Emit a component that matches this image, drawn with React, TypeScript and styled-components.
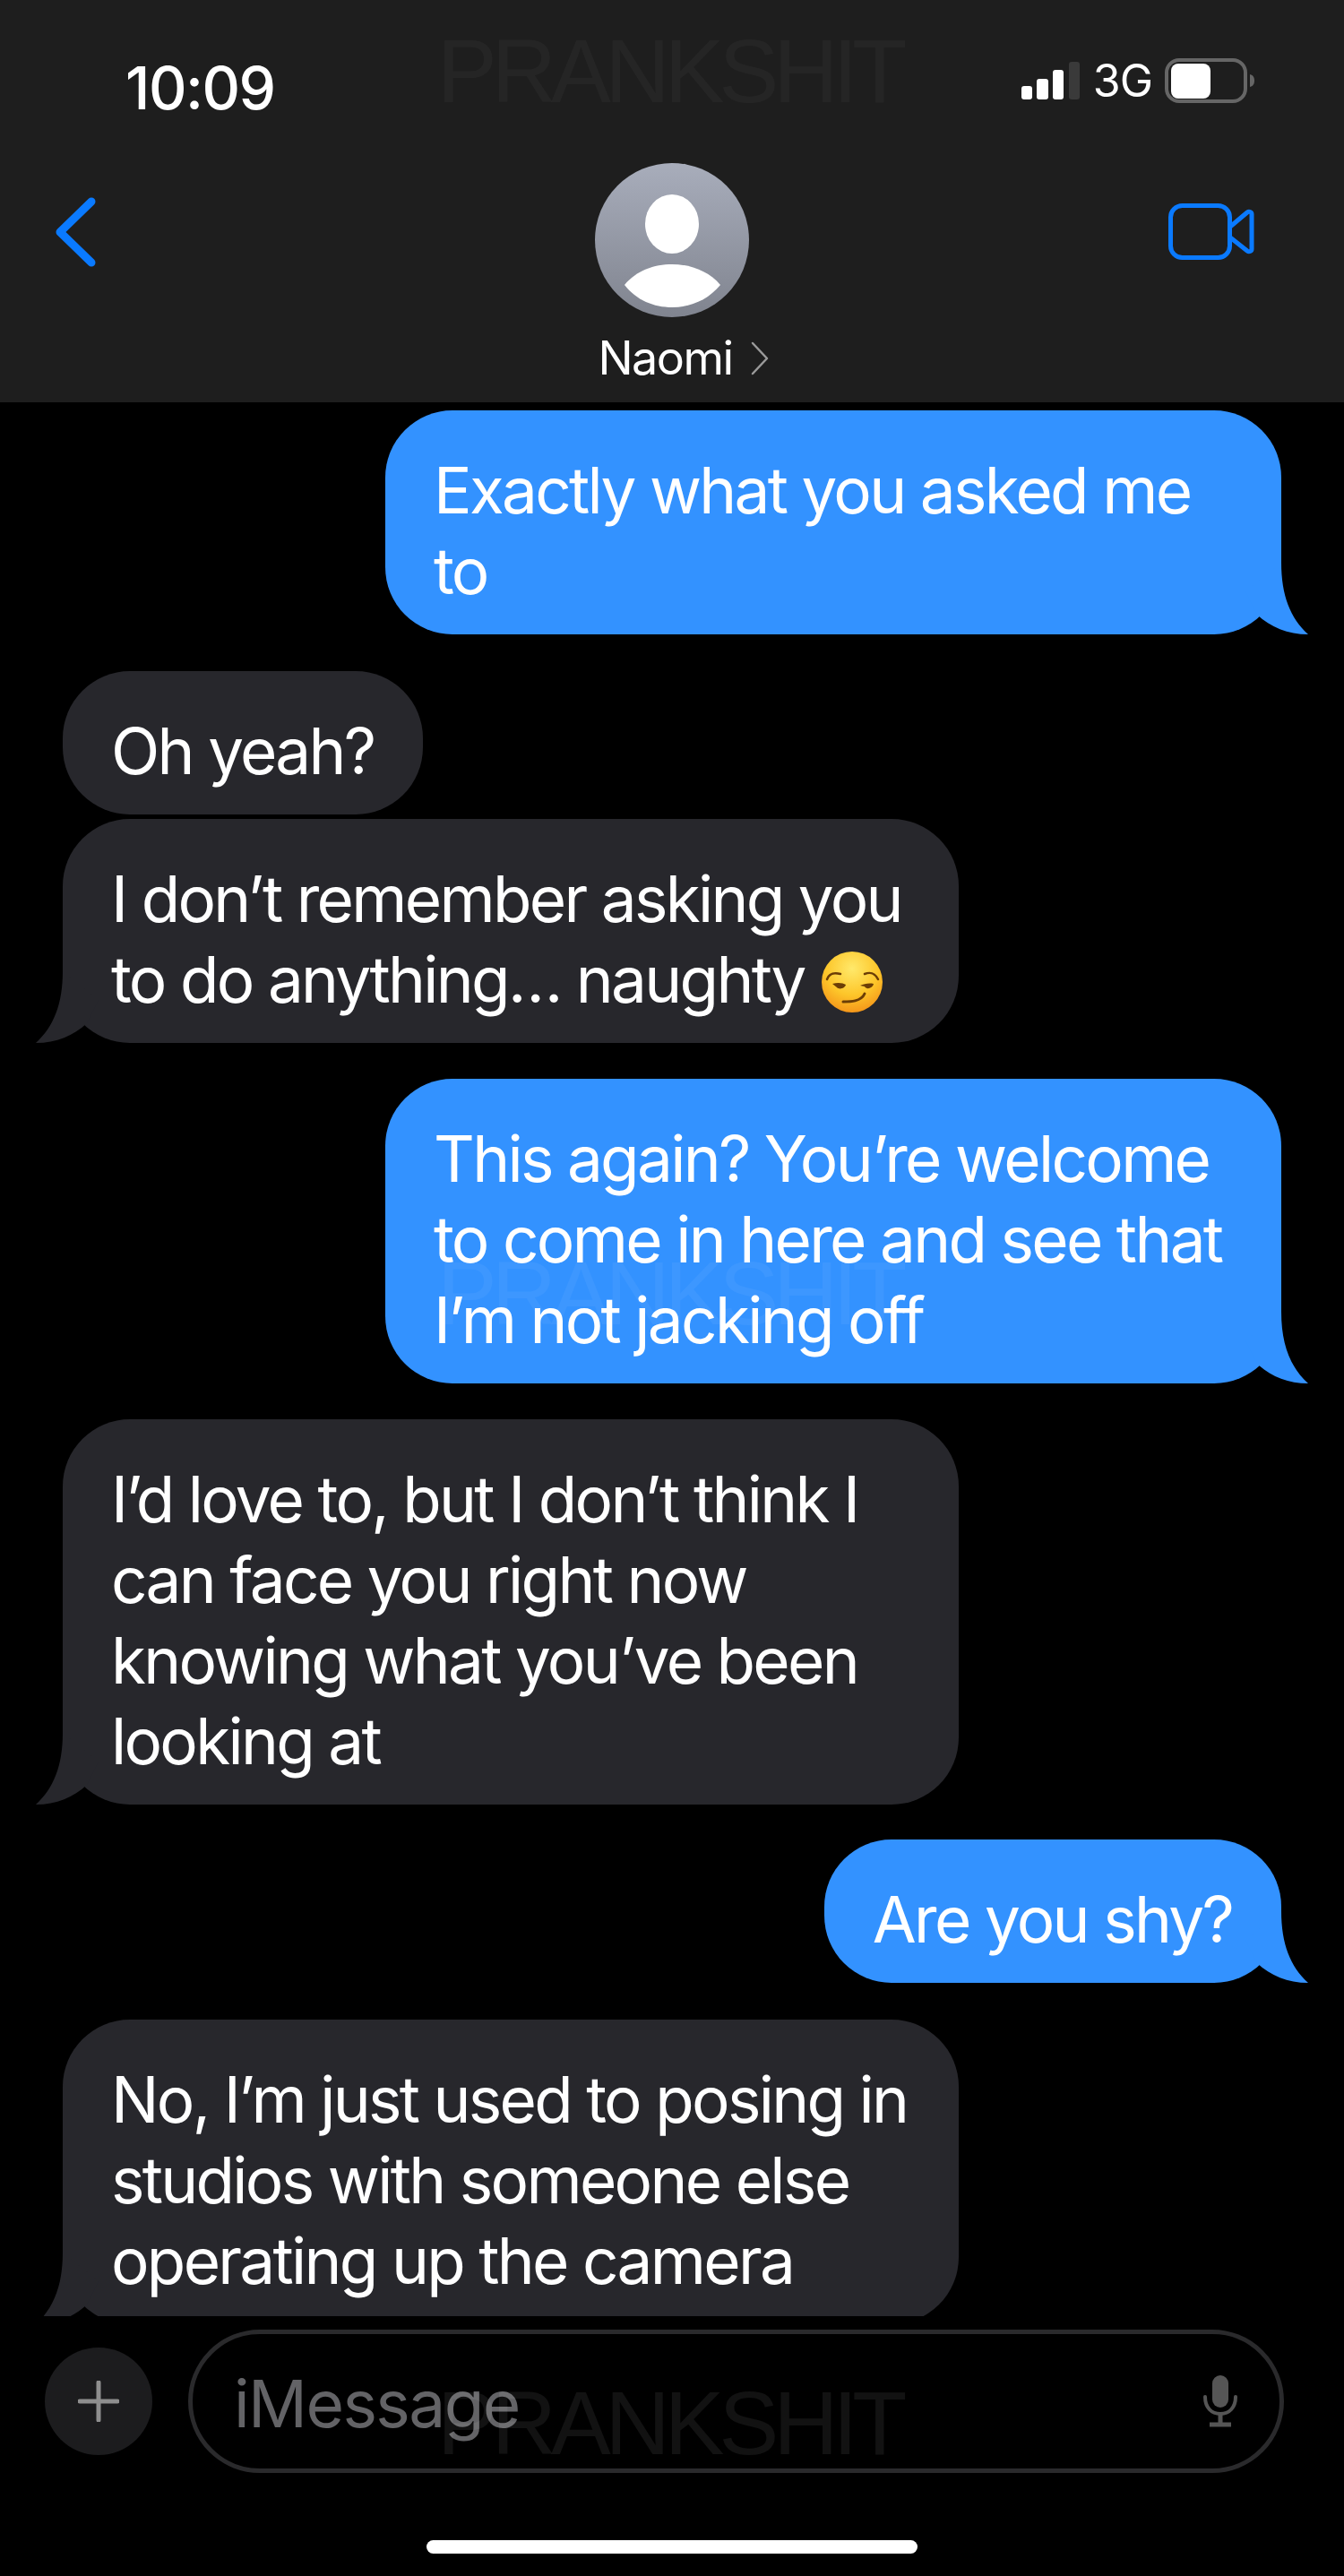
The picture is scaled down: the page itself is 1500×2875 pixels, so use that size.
import styled, { createGlobalStyle } from 'styled-components';

const GlobalStyle = createGlobalStyle`
  html, body {
    margin: 0;
    padding: 0;
    background: #000;
  }
  body {
    font-family: Inter, "Liberation Sans", sans-serif;
    color: #fff;
  }
`;

const Screen = styled.div`
  position: relative;
  width: 1500px;
  height: 2875px;
  display: flex;
  flex-direction: column;
  overflow: hidden;
  background: #000;
`;

const Watermark = styled.div<{ $top: number; $alpha: number }>`
  position: absolute;
  top: ${p => p.$top}px;
  left: 488px;
  font-family: "Liberation Sans", sans-serif;
  font-size: 100px;
  line-height: 72px;
  letter-spacing: -6px;
  white-space: nowrap;
  color: rgba(255, 255, 255, ${p => p.$alpha});
  pointer-events: none;
`;

const Header = styled.header`
  height: 449px;
  flex: none;
  background: #1e1e1e;
`;

const StatusBar = styled.div`
  height: 182px;
  padding: 64px 100px 0 140px;
  box-sizing: border-box;
  display: flex;
  justify-content: space-between;
  align-items: flex-start;
`;

const Clock = styled.span`
  font-size: 66px;
  line-height: 68px;
  font-weight: 500;
  letter-spacing: -1.5px;
`;

const StatusIcons = styled.div`
  display: flex;
  align-items: center;
  gap: 14px;
  margin-top: 1px;
`;

const Network = styled.span`
  font-size: 50px;
  line-height: 50px;
  letter-spacing: -1px;
`;

const Nav = styled.nav`
  display: grid;
  grid-template-columns: 1fr auto 1fr;
  padding: 0 100px;
`;

const Contact = styled.div`
  display: flex;
  flex-direction: column;
  align-items: center;
`;

const ContactName = styled.div`
  display: flex;
  align-items: center;
  gap: 20px;
  margin-top: 16px;
  padding-left: 25px;
  font-size: 52px;
  line-height: 60px;
  letter-spacing: -1.5px;
`;

const BackIcon = styled.svg`
  margin: 36px 0 0 -40px;
`;

const VideoIcon = styled.svg`
  margin-top: 45px;
  justify-self: end;
`;

const Messages = styled.main`
  height: 2136px;
  flex: none;
  padding: 9px 70px 0;
  box-sizing: border-box;
  display: flex;
  flex-direction: column;
  overflow: hidden;
`;

const Bubble = styled.div<{ $sent?: boolean; $gap: number }>`
  position: relative;
  flex: none;
  width: fit-content;
  max-width: 1000px;
  box-sizing: border-box;
  margin-top: ${p => p.$gap}px;
  padding: 44px 55px 26px 54px;
  align-self: ${p => (p.$sent ? 'flex-end' : 'flex-start')};
  border-radius: 75px;
  background: ${p => (p.$sent ? '#3392ff' : '#27272c')};
  font-size: 71px;
  line-height: 90px;
  letter-spacing: -2.7px;
  &:first-child {
    margin-top: 0;
  }
`;

const BubbleText = styled.div`
  position: relative;
`;

const Tail = styled.svg<{ $sent?: boolean }>`
  position: absolute;
  bottom: 0;
  ${p => (p.$sent ? 'right: -30px;' : 'left: -30px; transform: scaleX(-1);')}
`;

const Emoji = styled.svg`
  display: inline-block;
  vertical-align: -11px;
  margin-left: 2px;
`;

const Composer = styled.footer`
  margin-top: 15px;
  padding: 0 67px 0 50px;
  display: flex;
  align-items: center;
  gap: 40px;
`;

const PlusButton = styled.div`
  width: 120px;
  height: 120px;
  flex: none;
  border-radius: 50%;
  background: #1c1c1e;
  display: flex;
  align-items: center;
  justify-content: center;
`;

const Input = styled.div`
  flex: 1;
  height: 160px;
  box-sizing: border-box;
  padding: 0 46px 0 46px;
  border: 5px solid #2a2a2c;
  border-radius: 80px;
  display: flex;
  align-items: center;
  justify-content: space-between;
`;

const Placeholder = styled.span`
  padding-top: 5px;
  font-size: 73px;
  letter-spacing: -1.6px;
  color: #636366;
`;

const HomeBar = styled.div`
  width: 548px;
  height: 15px;
  margin: 75px auto 0;
  border-radius: 8px;
  background: #fff;
`;

function BubbleTail({ sent, fill }: { sent?: boolean; fill: string }) {
  return (
    <Tail $sent={sent} width="70" height="88" viewBox="0 0 70 88">
      <path d="M40 8 C40 44 50 70 70 88 C47 88 28 80 13 66 L0 40 Z" fill={fill} />
    </Tail>
  );
}

function SmirkEmoji() {
  return (
    <Emoji width="68" height="68" viewBox="0 0 68 68">
      <defs>
        <radialGradient id="face" cx="50%" cy="28%" r="72%">
          <stop offset="0%" stopColor="#ffe96b" />
          <stop offset="60%" stopColor="#fdc62a" />
          <stop offset="100%" stopColor="#f5971a" />
        </radialGradient>
      </defs>
      <circle cx="34" cy="34" r="34" fill="url(#face)" />
      <path d="M6 31 C8 25 12 23 21 25" stroke="#6b3d06" strokeWidth="2.5" fill="none" strokeLinecap="round" />
      <path d="M48 25 C56 22 60 25 63 31" stroke="#6b3d06" strokeWidth="2.5" fill="none" strokeLinecap="round" />
      <path d="M12 36 C18 34 24 35 27 37 C26 41 20 43 17 40 Z" fill="#6b3d06" />
      <path d="M43 38 C47 36 53 35 58 36 C57 41 50 43 48 39 Z" fill="#6b3d06" />
      <path d="M24 56 C32 56 44 56 48 47" stroke="#6b3d06" strokeWidth="3" fill="none" strokeLinecap="round" />
    </Emoji>
  );
}

const messages = [
  { sent: true, gap: 0, text: 'Exactly what you asked me to' },
  { gap: 41, text: 'Oh yeah?', noTail: true },
  { gap: 5, text: 'I don’t remember asking you to do anything… naughty ', emoji: true },
  { sent: true, gap: 40, text: 'This again? You’re welcome to come in here and see that I’m not jacking off' },
  { gap: 40, text: 'I’d love to, but I don’t think I can face you right now knowing what you’ve been looking at' },
  { sent: true, gap: 39, text: 'Are you shy?' },
  { gap: 41, text: 'No, I’m just used to posing in studios with someone else operating up the camera' },
];

export default function App() {
  return (
    <Screen>
      <GlobalStyle />
      <Header>
        <StatusBar>
          <Clock>10:09</Clock>
          <StatusIcons>
            <svg width="66" height="43" viewBox="0 0 66 43">
              <rect x="0" y="27" width="12" height="15" rx="3" fill="#fff" />
              <rect x="17" y="19" width="13" height="23" rx="3" fill="#fff" />
              <rect x="35" y="9" width="12" height="33" rx="3" fill="#fff" />
              <rect x="53" y="0" width="12" height="42" rx="3" fill="#3a3a3a" />
            </svg>
            <Network>3G</Network>
            <svg width="100" height="50" viewBox="0 0 100 50">
              <rect x="2" y="2" width="88" height="46" rx="14" fill="none" stroke="#666" strokeWidth="4" />
              <rect x="7" y="6" width="44" height="39" rx="8" fill="#fff" />
              <path d="M95 18 C99 19 100 22 100 25 C100 28 99 31 95 32 Z" fill="#666" />
            </svg>
          </StatusIcons>
        </StatusBar>
        <Nav>
          <BackIcon width="50" height="82" viewBox="0 0 50 82">
            <path d="M42 7 L7 41 L42 75" fill="none" stroke="#0a7aff" strokeWidth="9" strokeLinecap="round" strokeLinejoin="round" />
          </BackIcon>
          <Contact>
            <svg width="172" height="172" viewBox="0 0 172 172">
              <defs>
                <linearGradient id="avatar" x1="0" y1="0" x2="0" y2="1">
                  <stop offset="0%" stopColor="#a8adbb" />
                  <stop offset="100%" stopColor="#80848f" />
                </linearGradient>
              </defs>
              <circle cx="86" cy="86" r="86" fill="url(#avatar)" />
              <ellipse cx="86" cy="68" rx="30" ry="33" fill="#fff" />
              <path d="M33 136 C46 120 66 113 86 113 C106 113 126 120 140 136 C126 153 106 161 86 161 C66 161 46 153 33 136 Z" fill="#fff" />
            </svg>
            <ContactName>
              Naomi
              <svg width="20" height="38" viewBox="0 0 20 38">
                <path d="M2 2 L18 19 L2 36" fill="none" stroke="#9a9a9a" strokeWidth="2.5" strokeLinecap="round" strokeLinejoin="round" />
              </svg>
            </ContactName>
          </Contact>
          <VideoIcon width="96" height="64" viewBox="0 0 96 64">
            <rect x="2.5" y="2.5" width="66" height="58" rx="13" fill="none" stroke="#0a7aff" strokeWidth="5" />
            <path d="M69 26 L88 10 C90 8.500 93 9.500 93 12 L93 51 C93 53.500 90 54.500 88 53 L69 38" fill="none" stroke="#0a7aff" strokeWidth="5" strokeLinejoin="round" />
          </VideoIcon>
        </Nav>
      </Header>
      <Messages>
        {messages.map(m => (
          <Bubble key={m.text} $sent={m.sent} $gap={m.gap}>
            {!m.noTail && <BubbleTail sent={m.sent} fill={m.sent ? '#3392ff' : '#27272c'} />}
            <BubbleText>
              {m.text}
              {m.emoji && <SmirkEmoji />}
            </BubbleText>
          </Bubble>
        ))}
      </Messages>
      <Composer>
        <PlusButton>
          <svg width="46" height="46" viewBox="0 0 46 46">
            <path d="M23 2 V44 M2 23 H44" stroke="#8e8e8e" strokeWidth="5" strokeLinecap="round" />
          </svg>
        </PlusButton>
        <Input>
          <Placeholder>iMessage</Placeholder>
          <svg width="40" height="58" viewBox="0 0 40 58">
            <rect x="11" y="0" width="18" height="36" rx="9" fill="#555" />
            <path d="M3 24 C3 36 10 43 20 43 C30 43 37 36 37 24" fill="none" stroke="#555" strokeWidth="4" strokeLinecap="round" />
            <path d="M20 43 V54 M8 55 H32" stroke="#555" strokeWidth="5" />
          </svg>
        </Input>
      </Composer>
      <HomeBar />
      <Watermark $top={43} $alpha={0.035}>PRANKSHIT</Watermark>
      <Watermark $top={1407} $alpha={0.05}>PRANKSHIT</Watermark>
      <Watermark $top={2668} $alpha={0.07}>PRANKSHIT</Watermark>
    </Screen>
  );
}
